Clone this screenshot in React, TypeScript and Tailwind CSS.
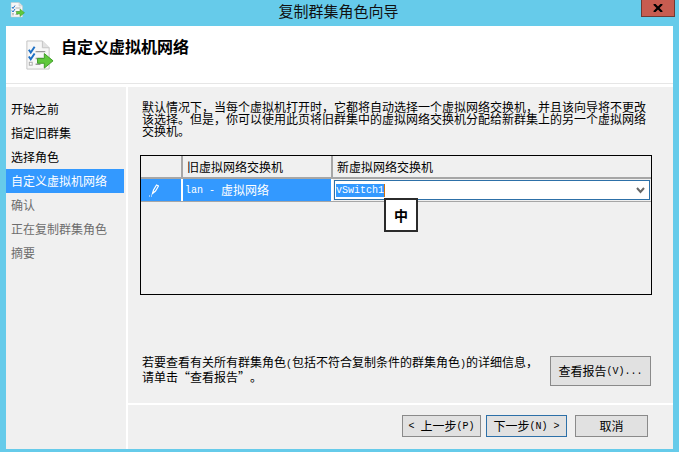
import type { ReactNode } from "react";

const steps = [
  { label: "开始之前", state: "done" },
  { label: "指定旧群集", state: "done" },
  { label: "选择角色", state: "done" },
  { label: "自定义虚拟机网络", state: "active" },
  { label: "确认", state: "todo" },
  { label: "正在复制群集角色", state: "todo" },
  { label: "摘要", state: "todo" },
];

const WizardIcon = ({ size }: { size: number }) => (
  <svg width={size} height={size} viewBox="0 0 32 32">
    <path d="M4 1h16l7 7v22H4z" fill="#f7f7f7" stroke="#c4c4c4" />
    <path d="M20 1v7h7" fill="#e2e2e2" stroke="#c4c4c4" />
    <path d="M6 10l2 3 4-6" fill="none" stroke="#1d6fc4" strokeWidth="2" />
    <path d="M6 17l2 3 4-6" fill="none" stroke="#1d6fc4" strokeWidth="2" />
    <rect x="6.5" y="23" width="3" height="3" fill="#fff" stroke="#aaa" />
    <path d="M13 12h10M13 19h8M13 25h5" stroke="#999" strokeWidth="1.5" />
    <path d="M15 19h7v-5l9 7.500-9 7.500v-5h-7z" fill="#5fc83c" stroke="#3e9a26" />
  </svg>
);

const Mono = ({ children }: { children: ReactNode }) => (
  <span className="whitespace-pre font-['Liberation_Mono',monospace] text-[10px]">{children}</span>
);

const Button = ({ children, className, focused }: { children: ReactNode; className: string; focused?: boolean }) => (
  <button
    className={`flex items-center justify-center whitespace-nowrap border bg-[#e1e1e1] text-[12px] text-black ${
      focused ? "border-[#2d70a8]" : "border-[#8a8a8a]"
    } ${className}`}
  >
    {children}
  </button>
);

export default function App() {
  return (
    <div
      lang="zh-CN"
      className="flex h-[452px] w-[679px] flex-col overflow-hidden bg-[#66cbea] font-['Noto_Sans_CJK_SC',sans-serif] text-[12px] text-black [text-spacing-trim:space-all]"
    >
      {/* title bar */}
      <div className="relative flex h-[26px] shrink-0 items-center justify-center pb-[5px] pr-[2px]">
        <div className="absolute left-[9px] top-[2px]">
          <WizardIcon size={16} />
        </div>
        <span className="text-[15px] leading-none text-[#111]">复制群集角色向导</span>
        <div className="absolute right-[4px] top-0 flex h-[17px] w-[34px] items-center justify-center border border-t-0 border-[#6e3a34] bg-[#c75c50]">
          <svg width="10" height="8" viewBox="0 0 10 8">
            <path d="M1 0l8 8M9 0l-8 8" stroke="#000" strokeWidth="2.200" />
          </svg>
        </div>
      </div>

      <div className="mx-[6px] mb-[3px] flex min-h-0 flex-1 flex-col bg-white">
        {/* header */}
        <div className="flex h-[58px] shrink-0 border-b border-[#e6e6e6] pl-[17px] pt-[14px]">
          <WizardIcon size={31} />
          <h1 className="-mt-[2px] ml-[7px] text-[16px] font-bold leading-[16px]">自定义虚拟机网络</h1>
        </div>

        <div className="mt-[3px] flex min-h-0 flex-1">
          {/* steps */}
          <div className="w-[120px] shrink-0 bg-[#f0f0f0] pt-[10px]">
            {steps.map((step) => (
              <div
                key={step.label}
                className={`mr-[2px] flex h-[24px] items-center pl-[5px] ${
                  step.state === "active"
                    ? "bg-[#3399ff] text-white"
                    : step.state === "todo"
                      ? "text-[#6d6d6d]"
                      : "text-black"
                }`}
              >
                {step.label}
              </div>
            ))}
          </div>

          <div className="ml-[2px] flex min-w-0 flex-1 flex-col">
            {/* main */}
            <div className="flex h-[318px] shrink-0 flex-col border-b-2 border-white bg-[#f0f0f0] pl-[12px] pr-[20px] pt-[14px]">
              <div className="whitespace-nowrap pl-[2px] leading-[12px]">
                <p>默认情况下，当每个虚拟机打开时，它都将自动选择一个虚拟网络交换机，并且该向导将不更改</p>
                <p>该选择。但是，你可以使用此页将旧群集中的虚拟网络交换机分配给新群集上的另一个虚拟网络</p>
                <p>交换机。</p>
              </div>

              {/* table */}
              <div className="relative mt-[18px] h-[140px] w-[512px] shrink-0 border border-black">
                <div className="grid h-[23px] grid-cols-[42px_150px_1fr] border-b-2 border-[#a6a6a6]">
                  <div className="border-r-2 border-[#a6a6a6]" />
                  <div className="flex items-center border-r-2 border-[#a6a6a6] pl-[4px]">旧虚拟网络交换机</div>
                  <div className="flex items-center pl-[4px]">新虚拟网络交换机</div>
                </div>
                <div className="grid h-[23px] grid-cols-[42px_150px_1fr] border-b border-[#a6a6a6]">
                  <div className="flex items-center border-r-2 border-white bg-[#3399ff] pl-[8px]">
                    <svg width="10" height="13" viewBox="0 0 10 13">
                      <path d="M3.500 9.500L4.500 6 7.500 1l2 1-3 5z" fill="none" stroke="#fff" strokeWidth="1.200" />
                      <path d="M0 12h1M2 12h1" stroke="#fff" />
                    </svg>
                  </div>
                  <div className="flex items-center whitespace-nowrap border-r-2 border-white bg-[#3399ff] pl-[2px] text-white">
                    <Mono>lan - </Mono>
                    <span>虚拟网络</span>
                  </div>
                  <div className="p-px">
                    <div className="flex h-full items-center justify-between border border-[#2d70a8] bg-white pl-[1px] pr-[4px]">
                      <div className="flex items-center">
                        <span className="bg-[#3399ff] font-['Liberation_Mono',monospace] text-[10px] leading-[13px] text-white">
                          vSwitch1
                        </span>
                        <span className="h-[13px] w-px bg-[#d4700a]" />
                      </div>
                      <svg width="9" height="7" viewBox="0 0 9 7">
                        <path d="M1 1l3.500 4L8 1" fill="none" stroke="#666" strokeWidth="2" />
                      </svg>
                    </div>
                  </div>
                </div>
                {/* input method badge */}
                <div className="absolute left-[243px] top-[42px] flex h-[34px] w-[34px] items-center justify-center border-[2px] border-[#2b2b2b] bg-white text-[14px] font-bold">
                  中
                </div>
              </div>

              <div className="mt-[61px] flex items-start justify-between">
                <div className="whitespace-nowrap pl-[2px] leading-[12px]">
                  <p>
                    若要查看有关所有群集角色<Mono>(</Mono>包括不符合复制条件的群集角色<Mono>)</Mono>的详细信息，
                  </p>
                  <p>请单击“查看报告”。</p>
                </div>
                <Button className="mr-[2px] h-[30px] w-[101px]">
                  查看报告<Mono>(V)...</Mono>
                </Button>
              </div>
            </div>

            {/* footer */}
            <div className="flex flex-1 items-start justify-end gap-[5px] bg-[#f0f0f0] pr-[25px] pt-[10px]">
              <Button className="h-[22px] w-[79px]">
                <Mono>{"< "}</Mono>上一步<Mono>(P)</Mono>
              </Button>
              <Button className="h-[22px] w-[81px]" focused>
                下一步<Mono>{"(N) >"}</Mono>
              </Button>
              <Button className="ml-[3px] h-[22px] w-[73px]">取消</Button>
            </div>
          </div>
        </div>
      </div>
    </div>
  );
}
